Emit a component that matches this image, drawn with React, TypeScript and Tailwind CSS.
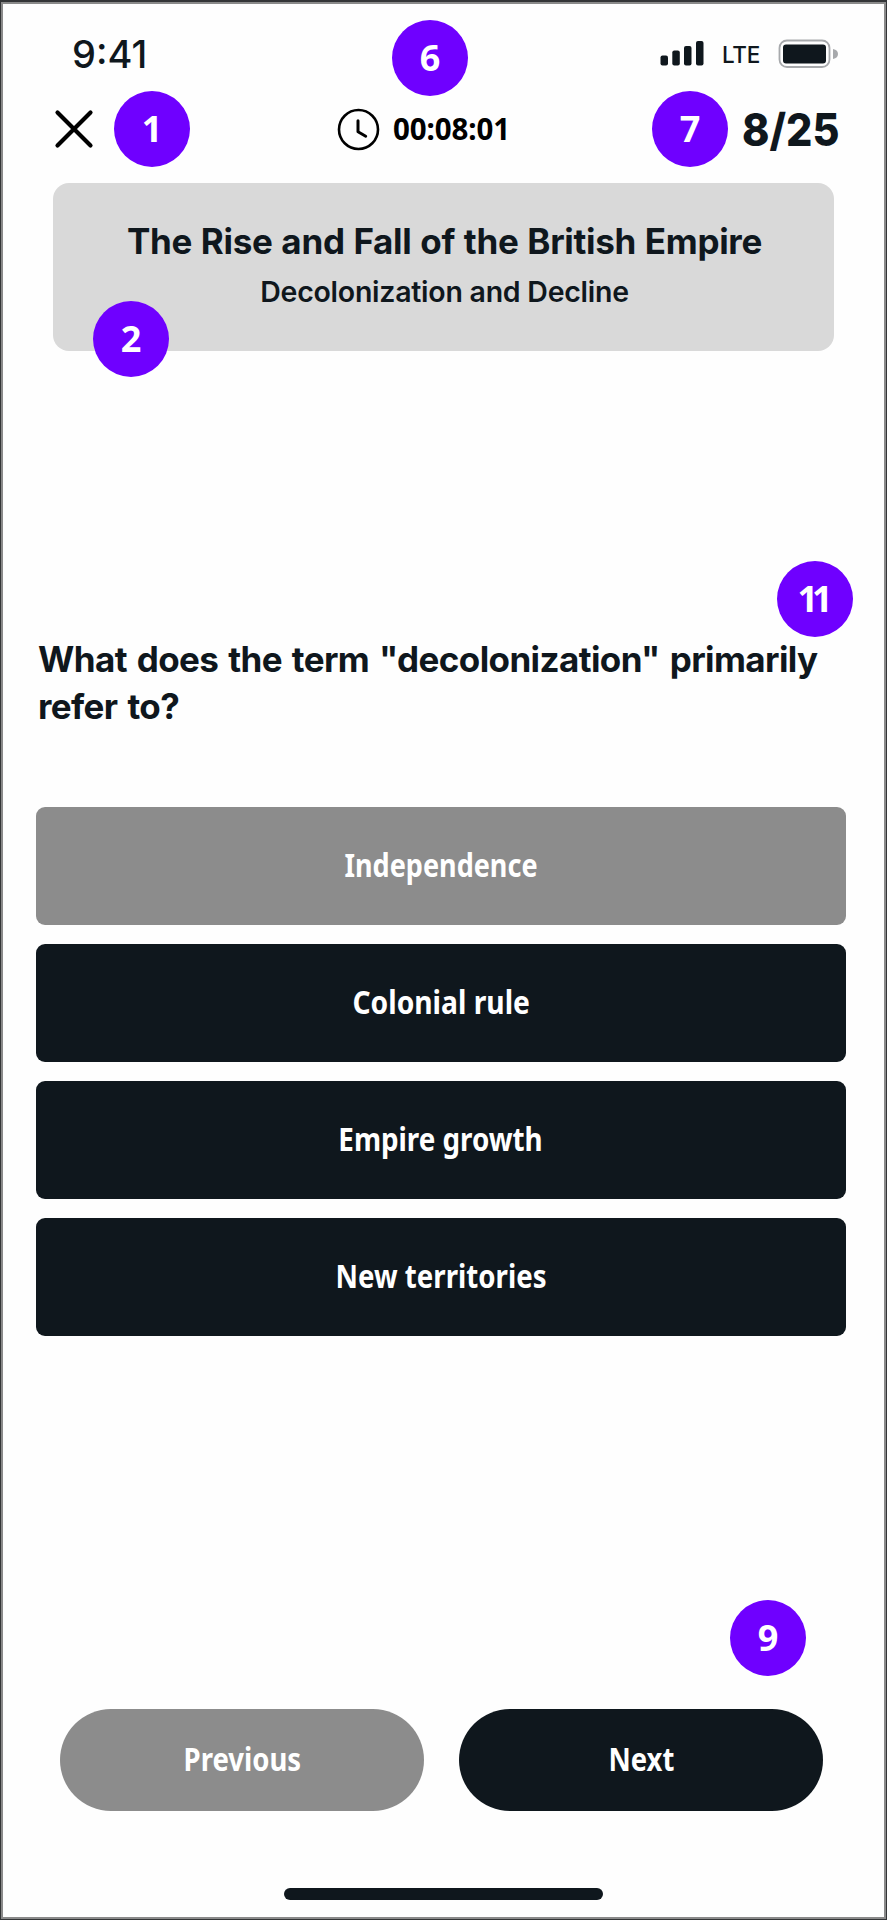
import type { ReactNode } from "react";

const answers = [
  { label: "Independence", selected: true, fit: "scale-x-[0.832]" },
  { label: "Colonial rule", selected: false, fit: "scale-x-[0.868]" },
  { label: "Empire growth", selected: false, fit: "scale-x-[0.855]" },
  { label: "New territories", selected: false, fit: "scale-x-[0.85]" },
];

function Badge({ place, children }: { place: string; children: ReactNode }) {
  return (
    <span
      className={`absolute z-10 flex h-[76px] w-[76px] items-center justify-center rounded-full bg-[#6f00ff] pb-px font-['Noto_Sans',sans-serif] text-[36px] leading-none font-bold text-white ${place}`}
    >
      {children}
    </span>
  );
}

function StatusBar() {
  return (
    <div className="flex h-[76px] items-center pl-[69px] text-[#0f171d]">
      <span className="w-[588px] font-['Inter',sans-serif] text-[38px] leading-none font-medium">
        9:41
      </span>
      <svg className="mb-[2px]" width="44" height="26" viewBox="0 0 44 26" fill="currentColor">
        <rect x="0.5" y="15.5" width="7.5" height="10" rx="2" />
        <rect x="12.3" y="10.5" width="7.5" height="15" rx="2" />
        <rect x="24" y="6" width="7.5" height="19.5" rx="2" />
        <rect x="36" y="1" width="7.5" height="24.5" rx="2" />
      </svg>
      <span className="mt-[3px] ml-[18px] w-[56px] font-['Inter',sans-serif] text-[22.5px] leading-none font-medium tracking-[-0.3px]">
        LTE
      </span>
      <svg className="mb-px" width="60" height="30" viewBox="0 0 60 30">
        <rect x="1.5" y="1.5" width="50" height="26.5" rx="7.5" fill="none" stroke="#a7a9ac" strokeWidth="1.8" />
        <rect x="5" y="5.5" width="43" height="19" rx="3" fill="#0f171d" />
        <path d="M55 10 C58.5 10.6 60 12.6 60 15 C60 17.4 58.5 19.4 55 20 Z" fill="#a7a9ac" />
      </svg>
    </div>
  );
}

function QuizNav() {
  return (
    <div className="flex h-[74px] items-center pl-[50px]">
      <button aria-label="Close" className="w-[284px]">
        <svg width="42" height="42" viewBox="0 0 42 42" fill="none" stroke="#000" strokeWidth="4.2" strokeLinecap="round">
          <path d="M4.5 4.5 37.5 37.5M37.5 4.5 4.5 37.5" />
        </svg>
      </button>
      <svg width="43" height="43" viewBox="0 0 43 43" fill="none" stroke="#000" strokeLinecap="round" strokeLinejoin="round">
        <circle cx="21.5" cy="21.5" r="19.5" strokeWidth="2.6" />
        <path d="M21 12.8V23.8L28.7 28.2" strokeWidth="3" />
      </svg>
      <span className="ml-[13px] w-[349px] font-['Noto_Sans',sans-serif] text-[29.5px] leading-none font-bold tracking-[-0.1px] text-black">
        00:08:01
      </span>
      <span className="inline-block origin-left scale-x-[0.92] font-['Inter',sans-serif] text-[45px] leading-none font-extrabold text-[#0f171d]">
        8/25
      </span>
    </div>
  );
}

export default function App() {
  return (
    <div className="h-[1920px] w-[887px] border border-t-2 border-[#333537] bg-white">
      <div className="relative flex h-[1917px] flex-col border-2 border-[#8a8a8a] bg-[#fefefe] pt-3">
        <StatusBar />
        <QuizNav />
        <Badge place="top-[16px] left-[389px]">6</Badge>
        <Badge place="top-[87px] left-[111px]">1</Badge>
        <Badge place="top-[87px] left-[649px]">7</Badge>
        <Badge place="top-[557px] left-[774px]">
          <span className="mr-[6px] tracking-[-6px]">11</span>
        </Badge>
        <Badge place="top-[1596px] left-[727px]">9</Badge>

        <section className="relative mt-[17px] ml-[50px] flex h-[168px] w-[781px] shrink-0 flex-col items-center rounded-2xl bg-[#d9d9d9] pt-[38px] pl-[2px] text-[#0f171d]">
          <h1 className="font-['Inter',sans-serif] text-[35px] leading-[40px] font-bold tracking-[-0.3px] [word-spacing:0.8px] whitespace-nowrap">
            The Rise and Fall of the British Empire
          </h1>
          <h2 className="mt-[11px] font-['Inter',sans-serif] text-[28.5px] leading-[40px] font-semibold tracking-[-0.25px] whitespace-nowrap">
            Decolonization and Decline
          </h2>
          <Badge place="top-[118px] left-[40px]">2</Badge>
        </section>

        <p className="mt-[285px] ml-[35px] font-['Inter',sans-serif] text-[35px] leading-[47px] font-bold tracking-[-0.6px] [word-spacing:2.2px] whitespace-nowrap text-[#0f171d]">
          What does the term "decolonization" primarily
          <br />
          refer to?
        </p>

        <div className="mt-[77px] ml-[33px] flex w-[810px] flex-col gap-[19px]">
          {answers.map((a) => (
            <button
              key={a.label}
              className={`flex h-[118px] items-center justify-center rounded-[9px] pb-[2px] font-['Noto_Sans',sans-serif] text-[32.5px] leading-none font-bold text-white ${a.selected ? "bg-[#8c8c8c]" : "bg-[#0f171d]"}`}
            >
              <span className={`inline-block ${a.fit}`}>{a.label}</span>
            </button>
          ))}
        </div>

        <div className="mt-[373px] ml-[57px] flex gap-[35px] font-['Noto_Sans',sans-serif] text-[32px] leading-none font-bold text-white">
          <button className="flex h-[102px] w-[364px] items-center justify-center rounded-full bg-[#8c8c8c] pb-[3px]">
            <span className="inline-block scale-x-[0.86]">Previous</span>
          </button>
          <button className="flex h-[102px] w-[364px] items-center justify-center rounded-full bg-[#0f171d] pb-[3px]">
            <span className="inline-block scale-x-[0.856]">Next</span>
          </button>
        </div>

        <div className="mt-[77px] ml-[281px] h-[12px] w-[319px] rounded-full bg-[#0f171d]" />
      </div>
    </div>
  );
}
